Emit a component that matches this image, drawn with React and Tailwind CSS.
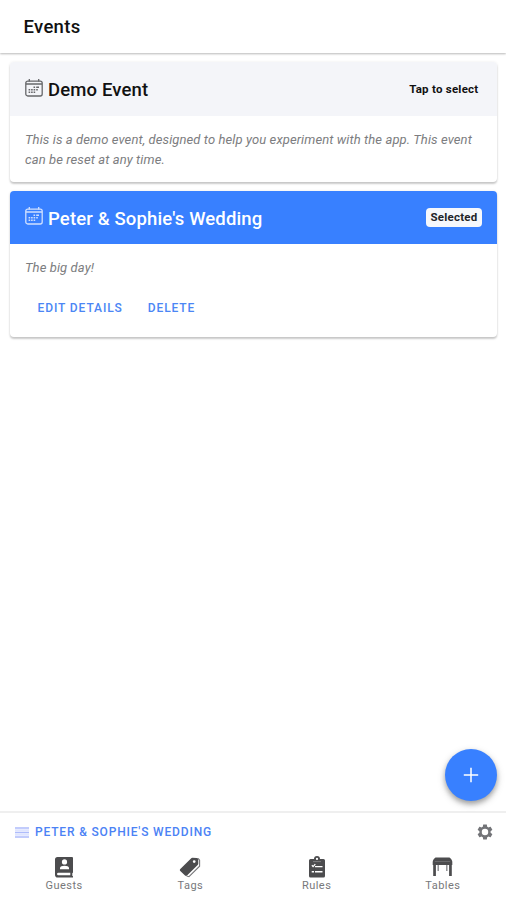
import React from "react";

function CalendarIcon({ className }) {
  return (
    <svg className={className} width="18" height="18" viewBox="0 0 18 18" fill="none" stroke="currentColor">
      <rect x="0.8" y="2.1" width="16.4" height="14.9" rx="2" strokeWidth="1.3" />
      <path d="M1 5.1h16" strokeWidth="1.5" />
      <path d="M4.3 0v2.4M13.7 0v2.4" strokeWidth="1.3" />
      <path d="M8.5 8.2h1.6M11.2 8.2h2.8M3.6 10.8h1.6M6.1 10.8h1.6M8.6 10.8h1.6M11.2 10.8h1.6M3.6 13.2h1.6M6.1 13.2h1.6M8.6 13.2h1.6" strokeWidth="1.4" />
    </svg>
  );
}

function ListIcon() {
  return (
    <svg width="14" height="11" viewBox="0 0 14 11" fill="none" stroke="#aebcfb">
      <path d="M0 3.2h14M0 7.8h14" stroke="#dfe5ff" strokeWidth="2" />
      <path d="M0 1h14M0 5.5h14M0 10h14" strokeWidth="1.3" />
    </svg>
  );
}

function GearIcon() {
  return (
    <svg width="18" height="18" viewBox="0 0 24 24" fill="#737478">
      <path
        fillRule="evenodd"
        d="M19.43 12.98c.04-.32.07-.64.07-.98s-.03-.66-.07-.98l2.11-1.65c.19-.15.24-.42.12-.64l-2-3.46c-.12-.22-.39-.3-.61-.22l-2.49 1c-.52-.4-1.08-.73-1.69-.98l-.38-2.65C14.46 2.18 14.25 2 14 2h-4c-.25 0-.46.18-.49.42l-.38 2.65c-.61.25-1.17.59-1.69.98l-2.49-1c-.23-.09-.49 0-.61.22l-2 3.46c-.13.22-.07.49.12.64l2.11 1.65c-.04.32-.07.65-.07.98s.03.66.07.98l-2.11 1.65c-.19.15-.24.42-.12.64l2 3.46c.12.22.39.3.61.22l2.49-1c.52.4 1.08.73 1.69.98l.38 2.65c.03.24.24.42.49.42h4c.25 0 .46-.18.49-.42l.38-2.65c.61-.25 1.17-.59 1.69-.98l2.49 1c.23.09.49 0 .61-.22l2-3.46c.12-.22.07-.49-.12-.64l-2.11-1.65zM12 16.3a4.3 4.3 0 1 1 0-8.6 4.3 4.3 0 0 1 0 8.6z"
      />
    </svg>
  );
}

function GuestsIcon() {
  return (
    <svg width="20" height="21" viewBox="0 0 20 21">
      <path d="M3.5 0H18a1 1 0 0 1 1 1v14.5l-.7.7v2.6l.7.5v1.2H3.8A2.8 2.8 0 0 1 1 17.7V2.5A2.5 2.5 0 0 1 3.5 0z" fill="#4c4c4e" />
      <circle cx="10.5" cy="4.9" r="2.6" fill="#fff" />
      <path d="M6 12.3v-1.2c0-1.6 2.1-2.4 4.5-2.4s4.5.8 4.5 2.4v1.2z" fill="#fff" />
      <path d="M4.3 15.7h12v2.5h-12a1.25 1.25 0 0 1 0-2.5z" fill="#fff" />
    </svg>
  );
}

function TagsIcon() {
  return (
    <svg width="22" height="21" viewBox="0 0 22 21">
      <path d="M19.1 1.4l1.5 1.8v6L10 19.7l-2.4-.8" fill="none" stroke="#77777a" strokeWidth="1.1" />
      <path
        fillRule="evenodd"
        d="M1.3 12.1L12 1.4c.4-.4.8-.6 1.4-.6l4.3.1c.9 0 1.5.7 1.5 1.5l.1 4.2c0 .6-.2 1-.6 1.4L8 18.6c-.6.6-1.4.6-2 0l-4.7-4.5c-.6-.6-.6-1.4 0-2zM15.2 3.2a1.4 1.4 0 1 0 0 2.8 1.4 1.4 0 0 0 0-2.8z"
        fill="#4c4c4e"
      />
    </svg>
  );
}

function RulesIcon() {
  return (
    <svg width="18" height="22" viewBox="0 0 18 22">
      <path
        fillRule="evenodd"
        d="M2.5 3H6a3 3 0 0 1 6 0h3.5A1.5 1.5 0 0 1 17 4.5V20a1.5 1.5 0 0 1-1.5 1.5h-13A1.5 1.5 0 0 1 1 20V4.5A1.5 1.5 0 0 1 2.5 3zM9 1.8a1.1 1.1 0 1 0 0 2.2 1.1 1.1 0 0 0 0-2.2z"
        fill="#4c4c4e"
      />
      <path d="M5 5.6h8" stroke="#8a8a8c" strokeWidth="0.8" />
      <path d="M3.9 9.3l1.2 1.3 2.2-2.5M7 10.7h7.5" fill="none" stroke="#fff" strokeWidth="1.3" />
      <path d="M3.7 15.8h2.3M7 15.8h7.5" stroke="#fff" strokeWidth="1.6" />
    </svg>
  );
}

function TablesIcon() {
  return (
    <svg width="21" height="20" viewBox="0 0 21 20" fill="#4c4c4e">
      <path d="M4 .5h13c1.3 0 3.3 2.8 3.3 4.5v3H.7V5C.7 3.3 2.7.5 4 .5z" />
      <path d="M2.8 4.5h15.4" stroke="#77777a" strokeWidth="0.7" />
      <path d="M1.2 8h2.7v11H1.2zM17.1 8h2.7v11h-2.7z" />
      <path d="M5.5 8h1.4v6H5.5zM14.1 8h1.4v6h-1.4z" fill="#8a8a8d" />
    </svg>
  );
}

const tabs = [
  { label: "Guests", Icon: GuestsIcon },
  { label: "Tags", Icon: TagsIcon },
  { label: "Rules", Icon: RulesIcon },
  { label: "Tables", Icon: TablesIcon },
];

const cardShadow = "shadow-[0_2px_2px_rgba(0,0,0,0.2),0_0_3px_rgba(0,0,0,0.08)]";

export default function App() {
  return (
    <div className="flex h-[900px] w-[506px] flex-col overflow-hidden bg-white font-[Roboto,sans-serif] text-[#111]">
      <header className="flex h-[53px] shrink-0 items-center pt-[2px] pl-[23.5px] shadow-[0_1px_2px_rgba(0,0,0,0.28)]">
        <h1 className="text-[18.5px] font-medium tracking-[0.3px]">Events</h1>
      </header>

      <main className="relative flex flex-1 flex-col gap-[9px] pt-[9px] pr-[9px] pl-[10px]">
        <section className={`h-[120px] overflow-hidden rounded-[4px] bg-white ${cardShadow}`}>
          <div className="flex h-[54px] items-center justify-between bg-[#f4f5f9] pr-[18.5px] pl-[15px]">
            <h2 className="flex items-center gap-[5px] pt-[3px] text-[18.5px] font-medium tracking-[0.15px]">
              <CalendarIcon className="-mt-[6px] text-[#66676a]" />
              Demo Event
            </h2>
            <span className="pt-[2px] text-[11.5px] font-bold tracking-[0.25px]">Tap to select</span>
          </div>
          <p className="px-[15px] pt-[14px] text-[13px] leading-[20px] tracking-[0.1px] whitespace-nowrap text-[#7c7d80] italic">
            This is a demo event, designed to help you experiment with the app. This event<br />
            can be reset at any time.
          </p>
        </section>

        <section className={`h-[146px] overflow-hidden rounded-[4px] bg-white ${cardShadow}`}>
          <div className="flex h-[53px] items-center justify-between bg-[#3880ff] pr-[15px] pl-[15px] text-white">
            <h2 className="flex items-center gap-[5px] pt-[4px] text-[18.5px] font-medium tracking-[0.15px]">
              <CalendarIcon className="-mt-[7px] text-[#d0e0ff]" />
              Peter &amp; Sophie's Wedding
            </h2>
            <span className="flex h-[19px] w-[56px] items-center justify-center rounded-[4px] bg-[#f6f8fc] text-[11.5px] font-bold tracking-[0.25px] text-[#222428]">Selected</span>
          </div>
          <p className="px-[15px] pt-[14px] text-[13px] leading-[20px] tracking-[0.1px] text-[#7c7d80] italic">The big day!</p>
          <div className="flex gap-[25px] pt-[20px] pl-[27.5px] text-[12px] leading-[20px] font-medium tracking-[0.9px] text-[#4b86f5]">
            <button>EDIT DETAILS</button>
            <button>DELETE</button>
          </div>
        </section>

        <button className="absolute right-[9px] bottom-[10px] flex size-[52px] items-center justify-center rounded-full bg-[#3880ff] shadow-[0_3px_5px_rgba(0,0,0,0.28),0_3px_9px_rgba(0,0,0,0.16)]">
          <svg width="16" height="16" viewBox="0 0 16 16" stroke="#fff" strokeWidth="1.5">
            <path d="M8 .8v14.4M.8 8h14.4" />
          </svg>
        </button>
      </main>

      <footer className="h-[89px] shrink-0 border-t-2 border-[#efefef] bg-white">
        <div className="flex h-[38px] items-center justify-between pr-[12px] pl-[15px]">
          <div className="flex items-center gap-[6px] text-[12px] font-medium tracking-[0.83px] text-[#4b82f5]">
            <ListIcon />
            PETER &amp; SOPHIE'S WEDDING
          </div>
          <GearIcon />
        </div>
        <nav className="grid grid-cols-4 pl-[1px]">
          {tabs.map(({ label, Icon }) => (
            <a key={label} className="flex flex-col items-center pt-[5px]">
              <span className="flex h-[22px] items-center"><Icon /></span>
              <span className="pt-[1px] text-[11px] leading-[14px] tracking-[0.45px] text-[#77787b]">{label}</span>
            </a>
          ))}
        </nav>
      </footer>
    </div>
  );
}
